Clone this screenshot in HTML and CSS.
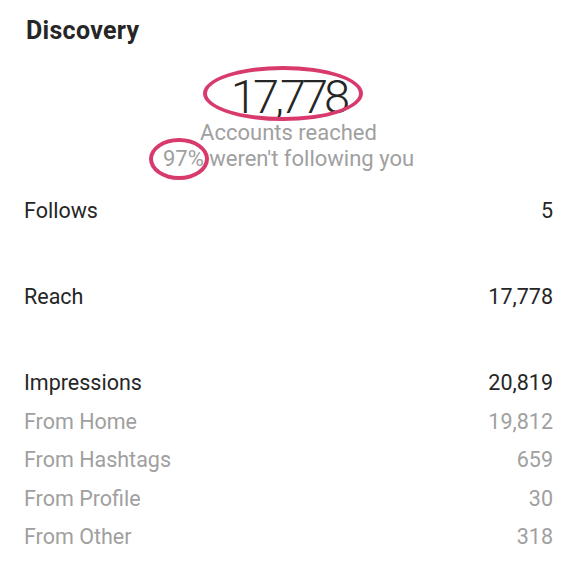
FILE: index.html
```html
<!DOCTYPE html>
<html lang="en">
<head>
<meta charset="UTF-8" />
<title>Discovery</title>
<link rel="stylesheet" href="styles.css">
</head>
<body>
  <h2 class="title">Discovery</h2>

  <div class="summary">
    <div class="big"><span class="num">17,778<span class="ring ring-big"></span></span></div>
    <div class="caption">Accounts reached</div>
    <div class="caption"><span class="pct">97%<span class="ring ring-small"></span></span> weren't following you</div>
  </div>

  <div class="rows">
    <div class="row main gap"><span>Follows</span><span>5</span></div>
    <div class="row main gap"><span>Reach</span><span>17,778</span></div>
    <div class="row main"><span>Impressions</span><span>20,819</span></div>
    <div class="row sub"><span>From Home</span><span>19,812</span></div>
    <div class="row sub"><span>From Hashtags</span><span>659</span></div>
    <div class="row sub"><span>From Profile</span><span>30</span></div>
    <div class="row sub"><span>From Other</span><span>318</span></div>
  </div>
</body>
</html>
```

FILE: styles.css
```css
body {
  margin: 0;
  padding: 0 27px 0 24px;
  background: #fff;
  font-family: Roboto, "Liberation Sans", sans-serif;
  color: #262626;
}
.title {
  margin: 0;
  padding-top: 17px;
  padding-left: 2px;
  font-size: 25px;
  line-height: 28px;
  font-weight: 700;
  letter-spacing: 0.3px;
}
.summary {
  margin-top: 28px;
  text-align: center;
}
.big {
  font-size: 47px;
  line-height: 47px;
  font-weight: 300;
  letter-spacing: -4px;
}
.num, .pct {
  position: relative;
}
.caption {
  font-size: 22px;
  line-height: 26px;
  color: #a0a0a0;
}
.ring {
  position: absolute;
  border: 4px solid #d83a6c;
  border-radius: 50%;
  box-sizing: border-box;
  pointer-events: none;
}
.ring-big {
  left: -28px;
  right: -17px;
  top: -3px;
  height: 55px;
}
.ring-small {
  left: -14px;
  right: -5px;
  top: -8.5px;
  height: 42px;
}
.rows {
  margin-top: 20px;
}
.row {
  display: flex;
  justify-content: space-between;
  font-size: 21.5px;
  line-height: 38.5px;
}
.row.gap {
  margin-bottom: 47.5px;
}
.row.sub {
  color: #a0a0a0;
}
```
